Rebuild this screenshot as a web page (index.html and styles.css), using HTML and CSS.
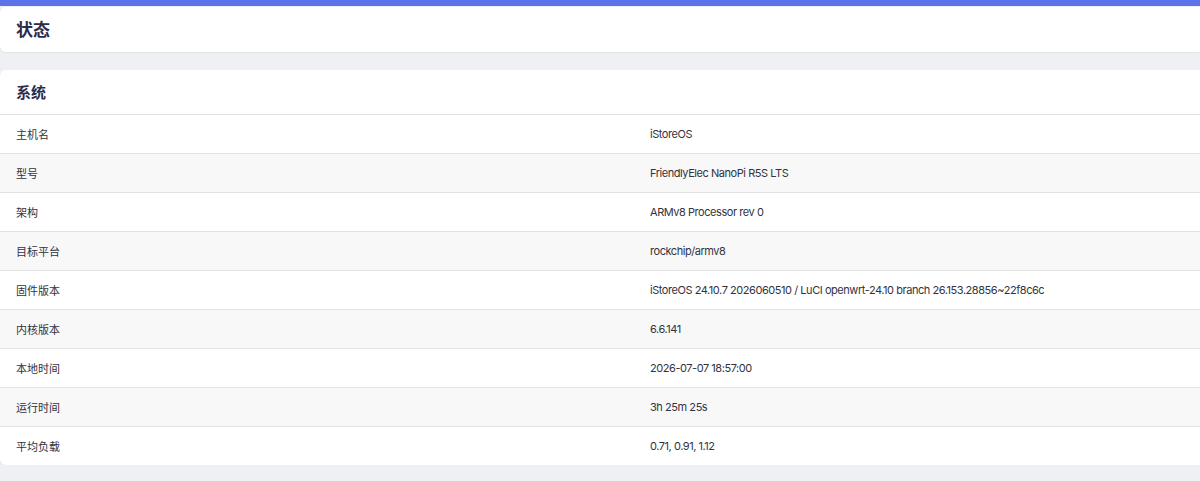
FILE: index.html
```html
<!DOCTYPE html>
<html lang="zh">
<head>
<meta charset="utf-8">
<link rel="stylesheet" href="styles.css">
</head>
<body>
<div class="topbar"></div>
<main class="main">
  <section class="card page-title">
    <h2>状态</h2>
  </section>
  <section class="card system">
    <h3 class="card-head">系统</h3>
    <div class="table">
      <div class="row"><div class="key">主机名</div><div class="val">iStoreOS</div></div>
      <div class="row alt"><div class="key">型号</div><div class="val">FriendlyElec NanoPi R5S LTS</div></div>
      <div class="row"><div class="key">架构</div><div class="val">ARMv8 Processor rev 0</div></div>
      <div class="row alt"><div class="key">目标平台</div><div class="val">rockchip/armv8</div></div>
      <div class="row"><div class="key">固件版本</div><div class="val">iStoreOS 24.10.7 2026060510 / LuCI openwrt-24.10 branch 26.153.28856~22f8c6c</div></div>
      <div class="row alt"><div class="key">内核版本</div><div class="val">6.6.141</div></div>
      <div class="row"><div class="key">本地时间</div><div class="val">2026-07-07 18:57:00</div></div>
      <div class="row alt"><div class="key">运行时间</div><div class="val">3h 25m 25s</div></div>
      <div class="row"><div class="key">平均负载</div><div class="val">0.71, 0.91, 1.12</div></div>
    </div>
  </section>
</main>
</body>
</html>
```

FILE: styles.css
```css
html, body {
  margin: 0;
  padding: 0;
}
body {
  background: #eef0f4;
  font-family: Inter, "Noto Sans CJK SC", sans-serif;
  color: #333340;
}
.topbar {
  height: 6px;
  background: #5b73e8;
}
.main {
  display: flex;
  flex-direction: column;
  gap: 18px;
  padding-top: 1px;
}
.card {
  background: #fff;
  border-radius: 6px 0 0 6px;
  box-shadow: 0 1px 2px rgba(0,0,0,0.06);
}
.page-title {
  height: 45px;
  box-sizing: border-box;
  display: flex;
  align-items: center;
  padding: 0 0 2px 16px;
}
.page-title h2 {
  margin: 0;
  font-size: 17px;
  font-weight: 700;
  color: #2b2b4b;
}
.card-head {
  margin: 0;
  height: 44px;
  box-sizing: border-box;
  display: flex;
  align-items: center;
  padding: 0 0 2px 16px;
  font-size: 15px;
  font-weight: 700;
  color: #2b2b4b;
}
.table {
  display: flex;
  flex-direction: column;
}
.row {
  display: grid;
  grid-template-columns: 650px 1fr;
  height: 38px;
  align-items: center;
  border-top: 1px solid #e2e2e4;
  font-size: 11px;
}
.row.alt {
  background: #f8f8f8;
}
.key {
  padding-left: 16px;
}
.val {
  color: #333340;
  letter-spacing: -0.45px;
}
```
